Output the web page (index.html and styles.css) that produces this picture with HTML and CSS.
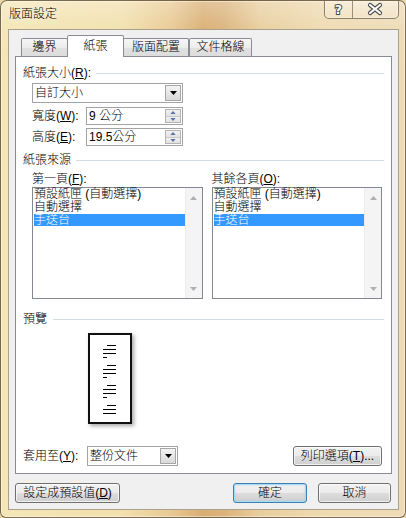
FILE: index.html
```html
<!DOCTYPE html>
<html lang="zh-Hant">
<head>
<meta charset="utf-8">
<title>版面設定</title>
<link rel="stylesheet" href="styles.css">
</head>
<body>
<div class="window">
  <div class="titlebar">
    <span class="title">版面設定</span>
    <div class="caption">
      <div class="cbtn help">
        <svg width="28" height="18" viewBox="0 0 28 18"><text x="14" y="14.5" text-anchor="middle" class="qmark">?</text></svg>
      </div>
      <div class="cbtn close">
        <svg width="45" height="18" viewBox="0 0 45 18"><path class="x-out" d="M17 5 L27 13 M27 5 L17 13"/><path class="x-in" d="M17 5 L27 13 M27 5 L17 13"/></svg>
      </div>
    </div>
  </div>

  <div class="client">
    <div class="tabs">
      <div class="tab t1">邊界</div>
      <div class="tab t2 active">紙張</div>
      <div class="tab t3">版面配置</div>
      <div class="tab t4">文件格線</div>
    </div>

    <div class="panel">
      <div class="group-head gh1"><span>紙張大小(<u>R</u>):</span><span class="rule"></span></div>

      <div class="combo combo-size">
        <span class="combo-text">自訂大小</span>
        <span class="drop-btn"><svg width="7" height="4" viewBox="0 0 7 4"><path d="M0 0H7L3.5 4Z"/></svg></span>
      </div>

      <div class="field-row fr1">
        <span class="field-label">寬度(<u>W</u>):</span>
        <div class="spin">
          <span class="spin-text">9 公分</span>
          <span class="spin-btns">
            <span class="sb"><svg width="7" height="4" viewBox="0 0 7 4"><path d="M0 4H7L3.5 0Z"/></svg></span>
            <span class="sb"><svg width="7" height="4" viewBox="0 0 7 4"><path d="M0 0H7L3.5 4Z"/></svg></span>
          </span>
        </div>
      </div>
      <div class="field-row fr2">
        <span class="field-label">高度(<u>E</u>):</span>
        <div class="spin">
          <span class="spin-text">19.5公分</span>
          <span class="spin-btns">
            <span class="sb"><svg width="7" height="4" viewBox="0 0 7 4"><path d="M0 4H7L3.5 0Z"/></svg></span>
            <span class="sb"><svg width="7" height="4" viewBox="0 0 7 4"><path d="M0 0H7L3.5 4Z"/></svg></span>
          </span>
        </div>
      </div>

      <div class="group-head gh2"><span>紙張來源</span><span class="rule"></span></div>

      <div class="trays">
        <div class="tray">
          <div class="tray-label">第一頁(<u>F</u>):</div>
          <div class="listbox">
            <ul class="items">
              <li>預設紙匣 (自動選擇)</li>
              <li>自動選擇</li>
              <li class="sel">手送台</li>
            </ul>
            <div class="vscroll">
              <span class="arr"><svg width="7" height="4" viewBox="0 0 7 4"><path d="M0 4H7L3.5 0Z"/></svg></span>
              <span class="arr"><svg width="7" height="4" viewBox="0 0 7 4"><path d="M0 0H7L3.5 4Z"/></svg></span>
            </div>
          </div>
        </div>
        <div class="tray">
          <div class="tray-label">其餘各頁(<u>O</u>):</div>
          <div class="listbox">
            <ul class="items">
              <li>預設紙匣 (自動選擇)</li>
              <li>自動選擇</li>
              <li class="sel">手送台</li>
            </ul>
            <div class="vscroll">
              <span class="arr"><svg width="7" height="4" viewBox="0 0 7 4"><path d="M0 4H7L3.5 0Z"/></svg></span>
              <span class="arr"><svg width="7" height="4" viewBox="0 0 7 4"><path d="M0 0H7L3.5 4Z"/></svg></span>
            </div>
          </div>
        </div>
      </div>

      <div class="group-head gh3"><span>預覽</span><span class="rule"></span></div>

      <div class="page">
        <svg width="40" height="87" viewBox="0 0 40 87">
          <g fill="#000">
            <rect x="17" y="10" width="9" height="1"/>
            <rect x="13" y="14" width="13" height="1"/>
            <rect x="13" y="18" width="13" height="1"/>
            <rect x="13" y="22" width="4" height="1"/>
            <rect x="17" y="30" width="9" height="1"/>
            <rect x="13" y="34" width="13" height="1"/>
            <rect x="13" y="38" width="13" height="1"/>
            <rect x="13" y="42" width="4" height="1"/>
            <rect x="17" y="50" width="9" height="1"/>
            <rect x="13" y="54" width="13" height="1"/>
            <rect x="13" y="58" width="13" height="1"/>
            <rect x="13" y="62" width="4" height="1"/>
            <rect x="17" y="70" width="9" height="1"/>
            <rect x="13" y="74" width="13" height="1"/>
            <rect x="13" y="78" width="13" height="1"/>
          </g>
        </svg>
      </div>

      <div class="apply-row">
        <span class="apply-label">套用至(<u>Y</u>):</span>
        <div class="combo combo-apply">
          <span class="combo-text">整份文件</span>
          <span class="drop-btn"><svg width="7" height="4" viewBox="0 0 7 4"><path d="M0 0H7L3.5 4Z"/></svg></span>
        </div>
        <button class="btn btn-print">列印選項(<u>T</u>)...</button>
      </div>
    </div>

    <div class="footer">
      <button class="btn btn-default-set">設定成預設值(<u>D</u>)</button>
      <button class="btn btn-ok">確定</button>
      <button class="btn btn-cancel">取消</button>
    </div>
  </div>
</div>
</body>
</html>
```

FILE: styles.css
```css
* { box-sizing: border-box; }

html, body {
  margin: 0;
  padding: 0;
}

body {
  width: 406px;
  height: 518px;
  overflow: hidden;
  background: #ecd9aa;
  font: 300 12px/14px "Liberation Sans", "Noto Sans CJK TC", sans-serif;
  color: #000;
}

u {
  text-decoration: underline;
  text-underline-offset: 1px;
}

/* ---------- window frame ---------- */
.window {
  width: 406px;
  height: 518px;
  border: 1px solid rgba(70, 55, 30, 0.7);
  border-radius: 7px 7px 6px 6px;
  background:
    linear-gradient(180deg, rgba(255, 255, 255, 0.28) 0, rgba(255, 255, 255, 0.05) 28px, rgba(255, 255, 255, 0) 60px),
    linear-gradient(90deg, #f5e6b6 0%, #f2e0ad 30%, #e8ca93 42%, #d9ae73 50%, #dbb27a 55%, #e8ce9d 64%, #efdab0 80%, #eedbb6 100%);
  box-shadow: inset 0 0 0 1px rgba(255, 255, 255, 0.45);
  display: flex;
  flex-direction: column;
  overflow: hidden;
}

.titlebar {
  height: 28px;
  display: flex;
  align-items: flex-start;
  padding-left: 8px;
  flex: none;
}

.title {
  margin-top: 6px;
  line-height: 14px;
  text-shadow: 0 0 6px rgba(255, 255, 255, 0.9);
}

.caption {
  margin-left: auto;
  margin-right: 6px;
  margin-top: -1px;
  height: 19px;
  display: flex;
  border: 1px solid rgba(70, 58, 35, 0.6);
  border-top: none;
  border-radius: 0 0 5px 5px;
  overflow: hidden;
  background: linear-gradient(180deg, rgba(255, 255, 255, 0.35), rgba(255, 255, 255, 0.12));
  box-shadow: inset 0 0 0 1px rgba(255, 255, 255, 0.35);
}

.cbtn {
  height: 18px;
  display: flex;
}

.cbtn.help {
  width: 28px;
  border-right: 1px solid rgba(70, 58, 35, 0.5);
}

.cbtn.close {
  width: 45px;
}

.qmark {
  font: bold 13px "DejaVu Sans", sans-serif;
  fill: #fff;
  stroke: #4a4a4a;
  stroke-width: 2px;
  paint-order: stroke;
}

.x-out {
  stroke: #4a4a4a;
  stroke-width: 4.2;
  stroke-linecap: round;
  fill: none;
}

.x-in {
  stroke: #ffffff;
  stroke-width: 2.2;
  stroke-linecap: round;
  fill: none;
}

/* ---------- client area ---------- */
.client {
  height: 481px;
  margin: 0 6px 0 7px;
  border: 1px solid #a9a18c;
  background: #f0f0f0;
  display: flex;
  flex-direction: column;
  flex: none;
}

.tabs {
  margin-top: 5px;
  height: 21px;
  padding-left: 12px;
  display: flex;
  align-items: flex-end;
  flex: none;
}

.tab {
  height: 18px;
  border: 1px solid #898c95;
  border-bottom: none;
  border-radius: 2px 2px 0 0;
  background: linear-gradient(180deg, #f6f6f6 0%, #ececec 50%, #e1e1e1 51%, #dddddd 100%);
  text-align: center;
  line-height: 17px;
}

.t1 { width: 47px; }
.t2 { width: 57px; margin-left: -1px; }
.t3 { width: 66px; margin-left: -1px; }
.t4 { width: 63px; }

.tab.active {
  height: 22px;
  margin-bottom: -1px;
  background: #fff;
  padding-top: 3px;
  line-height: 14px;
  position: relative;
  z-index: 1;
}

.panel {
  height: 418px;
  margin: 0 6px 0 6px;
  border: 1px solid #898c95;
  background: #fff;
  display: flex;
  flex-direction: column;
  padding: 0 9px 7px 0;
  flex: none;
}

.group-head {
  display: flex;
  align-items: center;
  padding-left: 7px;
  line-height: 14px;
  height: 14px;
  margin-right: -2px;
}

.group-head .rule {
  flex: 1;
  height: 1px;
  margin-left: 5px;
  background: #d5dbe2;
}

.gh1 { margin-top: 9px; }
.gh2 { margin-top: 7px; }
.gh3 { margin-top: 13px; }
.gh3 .rule { margin-left: 6px; }

/* ---------- combo & spin ---------- */
.combo {
  display: flex;
  border: 1px solid #a3a3a3;
  background: #fff;
  padding: 1px;
}

.combo-size {
  margin: 3px 0 0 16px;
  width: 151px;
  height: 20px;
}

.combo-text {
  flex: 1;
  padding-left: 1px;
  line-height: 16px;
}

.drop-btn {
  width: 16px;
  border: 1px solid #a6a6a6;
  background: linear-gradient(180deg, #f3f3f3 0%, #e6e6e6 50%, #d9d9d9 100%);
  display: flex;
  align-items: center;
  justify-content: center;
}

.drop-btn svg path { fill: #000; }

.field-row {
  display: flex;
  align-items: center;
  margin-left: 16px;
  height: 18px;
}

.fr1 { margin-top: 4px; }
.fr2 { margin-top: 3px; }

.field-label {
  width: 54px;
}

.spin {
  width: 97px;
  height: 18px;
  display: flex;
  border: 1px solid #a3a3a3;
  background: #fff;
  padding: 1px;
}

.spin-text {
  flex: 1;
  padding-left: 1px;
  line-height: 14px;
}

.spin-btns {
  width: 16px;
  display: flex;
  flex-direction: column;
  border: 1px solid #b4b4b4;
  background: #c9c9c9;
  gap: 1px;
}

.sb {
  flex: 1;
  display: flex;
  align-items: center;
  justify-content: center;
  background: linear-gradient(180deg, #f1f1f1, #e2e2e2);
}

.sb svg { width: 6px; height: 3px; }
.sb svg path { fill: #5a72a6; }

/* ---------- trays ---------- */
.trays {
  display: flex;
  gap: 9px;
  margin: 5px 0 0 16px;
}

.tray {
  width: 171px;
}

.tray-label {
  line-height: 14px;
  height: 14px;
}

.listbox {
  margin-top: 1px;
  height: 112px;
  border: 1px solid #828790;
  display: flex;
  padding: 0 0 0 1px;
  background: #fff;
}

.items {
  list-style: none;
  margin: 0;
  padding: 0;
  flex: 1;
}

.items li {
  height: 13px;
  line-height: 13px;
  white-space: nowrap;
}

.items li.sel {
  background: #3399ff;
  color: #fff;
  height: 12px;
  line-height: 12px;
}

.vscroll {
  width: 17px;
  background: #f4f4f4;
  border-left: 1px solid #ececec;
  display: flex;
  flex-direction: column;
  justify-content: space-between;
  align-items: center;
  padding: 8px 0 7px;
}

.arr {
  display: flex;
}

.arr svg path { fill: #b0b0b0; }

/* ---------- preview ---------- */
.page {
  margin: 7px 0 0 72px;
  width: 44px;
  height: 91px;
  border: 2px solid #111;
  background: #fff;
  box-shadow: 2px 2px 4px rgba(0, 0, 0, 0.35);
}

.page svg { display: block; }

/* ---------- apply row ---------- */
.apply-row {
  margin-top: auto;
  display: flex;
  align-items: center;
  padding-left: 7px;
  height: 21px;
}

.apply-label {
  width: 64px;
}

.combo-apply {
  width: 91px;
  height: 20px;
  margin-top: 1px;
}

/* ---------- buttons ---------- */
.btn {
  font: inherit;
  line-height: 14px;
  color: #000;
  height: 20px;
  padding: 0;
  border: 1px solid #707070;
  border-radius: 3px;
  background: linear-gradient(180deg, #f2f2f2 0%, #ebebeb 50%, #dddddd 51%, #cfcfcf 100%);
  box-shadow: inset 0 0 0 1px rgba(255, 255, 255, 0.7);
}

.btn-print {
  margin-left: auto;
  width: 89px;
}

.footer {
  display: flex;
  margin-top: 9px;
  padding: 0 7px 0 6px;
}

.btn-default-set {
  width: 105px;
}

.btn-ok {
  margin-left: auto;
  width: 74px;
  border-color: #3c7fb1;
  box-shadow: inset 0 0 0 1px #a8dcf6, inset 0 0 2px 1px rgba(120, 200, 240, 0.5);
}

.btn-cancel {
  margin-left: 11px;
  width: 73px;
}
```
